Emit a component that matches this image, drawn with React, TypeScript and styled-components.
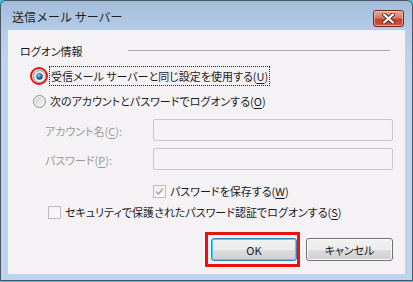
import styled, { createGlobalStyle } from 'styled-components';

const GlobalStyle = createGlobalStyle`
  html, body {
    margin: 0;
    padding: 0;
    background: #3cc3d6;
  }
  body {
    font-family: "Noto Sans CJK JP", "Liberation Sans", sans-serif;
    font-size: 12px;
    color: #1a1a1a;
  }
`;

const Window = styled.div`
  width: 413px;
  height: 281px;
  box-sizing: border-box;
  border: 1px solid #4b5662;
  border-radius: 6px 6px 0 0;
  background: linear-gradient(180deg, #a2bddb 0px, #b3cbe6 28px, #bcd4ef 60px, #bcd4ef 100%);
  display: flex;
  flex-direction: column;
  overflow: hidden;
`;

const TitleBar = styled.div`
  height: 29px;
  display: flex;
  align-items: flex-start;
  justify-content: space-between;
  padding: 0 8px 0 11px;
  flex-shrink: 0;
`;

const Title = styled.div`
  margin-top: 8px;
  font-size: 12px;
  line-height: 16px;
  color: #1e1e1e;
`;

const CloseButton = styled.div`
  margin-top: 9px;
  width: 31px;
  height: 17px;
  box-sizing: border-box;
  border: 1px solid #6e2a20;
  border-radius: 3px;
  background: linear-gradient(180deg, #e9a99c 0%, #d77a68 45%, #c4432c 55%, #c8553c 100%);
  box-shadow: inset 0 0 0 1px rgba(255, 220, 210, 0.55);
  display: flex;
  align-items: center;
  justify-content: center;
`;

const Content = styled.div`
  flex: 1;
  margin: 0 7px 6px 7px;
  background: #f5f2f5;
  display: flex;
  flex-direction: column;
  padding: 14px 12px 0 12px;
`;

const GroupHeader = styled.div`
  height: 14px;
  display: flex;
  align-items: center;
  gap: 45px;
`;

const GroupLine = styled.div`
  flex: 1;
  height: 1px;
  background: #a8a8a8;
  margin-right: 3px;
  margin-top: -2px;
`;

const Text = styled.span<{ $disabled?: boolean }>`
  font-size: 11px;
  line-height: 16px;
  white-space: nowrap;
  font-feature-settings: 'palt' 1;
  color: ${({ $disabled }) => ($disabled ? '#9a9a9a' : '#1a1a1a')};
`;

const Key = styled.u`
  text-underline-offset: 2px;
`;

const OptionRow = styled.div<{ $top: number; $indent: number }>`
  height: 18px;
  margin-top: ${({ $top }) => $top}px;
  padding-left: ${({ $indent }) => $indent}px;
  display: flex;
  align-items: center;
  gap: 2px;
`;

const Focus = styled.span`
  outline: 1px dotted #222;
  outline-offset: 0;
  padding: 0 1px;
  height: 18px;
  display: flex;
  align-items: center;
`;

const RadioWrap = styled.span<{ $marked?: boolean }>`
  width: 18px;
  height: 18px;
  box-sizing: border-box;
  border-radius: 50%;
  border: 2px solid ${({ $marked }) => ($marked ? '#e81212' : 'transparent')};
  display: flex;
  align-items: center;
  justify-content: center;
`;

const FieldRow = styled.div<{ $top: number }>`
  height: 22px;
  margin-top: ${({ $top }) => $top}px;
  display: flex;
  align-items: center;
  padding-left: 25px;
`;

const FieldLabel = styled.div`
  width: 108px;
`;

const Input = styled.div`
  width: 240px;
  height: 22px;
  box-sizing: border-box;
  border: 1px solid #c9c6c9;
  border-radius: 2px;
  background: #f5f2f5;
`;

const CheckRow = styled.div<{ $top: number; $indent: number }>`
  height: 14px;
  margin-top: ${({ $top }) => $top}px;
  padding-left: ${({ $indent }) => $indent}px;
  display: flex;
  align-items: center;
  gap: 4px;
`;

const CheckBox = styled.span`
  width: 13px;
  height: 13px;
  box-sizing: border-box;
  border: 1px solid #bdbbbd;
  background: linear-gradient(135deg, #f2f0f2, #fbfafb);
  display: flex;
  align-items: center;
  justify-content: center;
`;

const ButtonBar = styled.div`
  margin-top: 13px;
  display: flex;
  justify-content: flex-end;
  align-items: center;
  gap: 6px;
`;

const Highlight = styled.div`
  border: 3px solid #e81212;
  padding: 3px 0 3px 3px;
  display: flex;
`;

const Button = styled.div<{ $focused?: boolean }>`
  width: ${({ $focused }) => ($focused ? 86 : 87)}px;
  height: 23px;
  box-sizing: border-box;
  border: 1px solid ${({ $focused }) => ($focused ? '#3c7fb1' : '#707070')};
  border-radius: 3px;
  background: linear-gradient(180deg, #f2f2f2 0%, #ebebeb 50%, #dddddd 51%, #cfcfcf 100%);
  box-shadow: inset 0 0 0 1px ${({ $focused }) => ($focused ? '#48d5fb' : '#fbfbfb')};
  display: flex;
  align-items: center;
  justify-content: center;
  font-size: 11px;
  font-feature-settings: 'palt' 1;
  color: #1a1a1a;
`;

function Radio({ checked, marked }: { checked?: boolean; marked?: boolean }) {
  const ring = checked ? 'rg1' : 'rg2';
  return (
    <RadioWrap $marked={marked}>
      <svg width="13" height="13" viewBox="0 0 13 13">
        <defs>
          <linearGradient id={ring} x1="0" y1="0" x2="1" y2="1">
            <stop offset="0" stopColor="#d0d0d0" />
            <stop offset="1" stopColor="#fafafa" />
          </linearGradient>
          <radialGradient id="dot" cx="0.4" cy="0.35" r="0.7">
            <stop offset="0" stopColor="#9bd6f5" />
            <stop offset="0.45" stopColor="#2f7fba" />
            <stop offset="1" stopColor="#0e3f6c" />
          </radialGradient>
        </defs>
        <circle cx="6.5" cy="6.5" r="6" fill="#f2f2f2" stroke="#8f8f8f" strokeWidth="1" />
        <circle cx="6.5" cy="6.5" r="4.5" fill={`url(#${ring})`} />
        {checked && <circle cx="6.5" cy="6.5" r="3.2" fill="url(#dot)" />}
      </svg>
    </RadioWrap>
  );
}

export default function App() {
  return (
    <>
      <GlobalStyle />
      <Window>
        <TitleBar>
          <Title>送信メール サーバー</Title>
          <CloseButton>
            <svg width="13" height="11" viewBox="0 0 13 11">
              <path d="M2 1.5 L11 9.5 M11 1.5 L2 9.5" stroke="#5a2a22" strokeWidth="4" strokeLinecap="round" />
              <path d="M2 1.5 L11 9.5 M11 1.5 L2 9.5" stroke="#ffffff" strokeWidth="2.2" strokeLinecap="round" />
            </svg>
          </CloseButton>
        </TitleBar>
        <Content>
          <GroupHeader>
            <Text>ログオン情報</Text>
            <GroupLine />
          </GroupHeader>
          <OptionRow $top={9} $indent={10}>
            <Radio checked marked />
            <Focus>
              <Text>
                受信メール サーバーと同じ設定を使用する(<Key>U</Key>)
              </Text>
            </Focus>
          </OptionRow>
          <OptionRow $top={7} $indent={10}>
            <Radio />
            <Text>
              次のアカウントとパスワードでログオンする(<Key>O</Key>)
            </Text>
          </OptionRow>
          <FieldRow $top={9}>
            <FieldLabel>
              <Text $disabled>
                アカウント名(<Key>C</Key>):
              </Text>
            </FieldLabel>
            <Input />
          </FieldRow>
          <FieldRow $top={7}>
            <FieldLabel>
              <Text $disabled>
                パスワード(<Key>P</Key>):
              </Text>
            </FieldLabel>
            <Input />
          </FieldRow>
          <CheckRow $top={14} $indent={133}>
            <CheckBox>
              <svg width="9" height="9" viewBox="0 0 9 9">
                <path d="M1 4.5 L3.5 7 L8 1.5" fill="none" stroke="#a8a8a8" strokeWidth="1.6" />
              </svg>
            </CheckBox>
            <Text>
              パスワードを保存する(<Key>W</Key>)
            </Text>
          </CheckRow>
          <CheckRow $top={7} $indent={28}>
            <CheckBox />
            <Text>
              セキュリティで保護されたパスワード認証でログオンする(<Key>S</Key>)
            </Text>
          </CheckRow>
          <ButtonBar>
            <Highlight>
              <Button $focused>OK</Button>
            </Highlight>
            <Button>キャンセル</Button>
          </ButtonBar>
        </Content>
      </Window>
    </>
  );
}
